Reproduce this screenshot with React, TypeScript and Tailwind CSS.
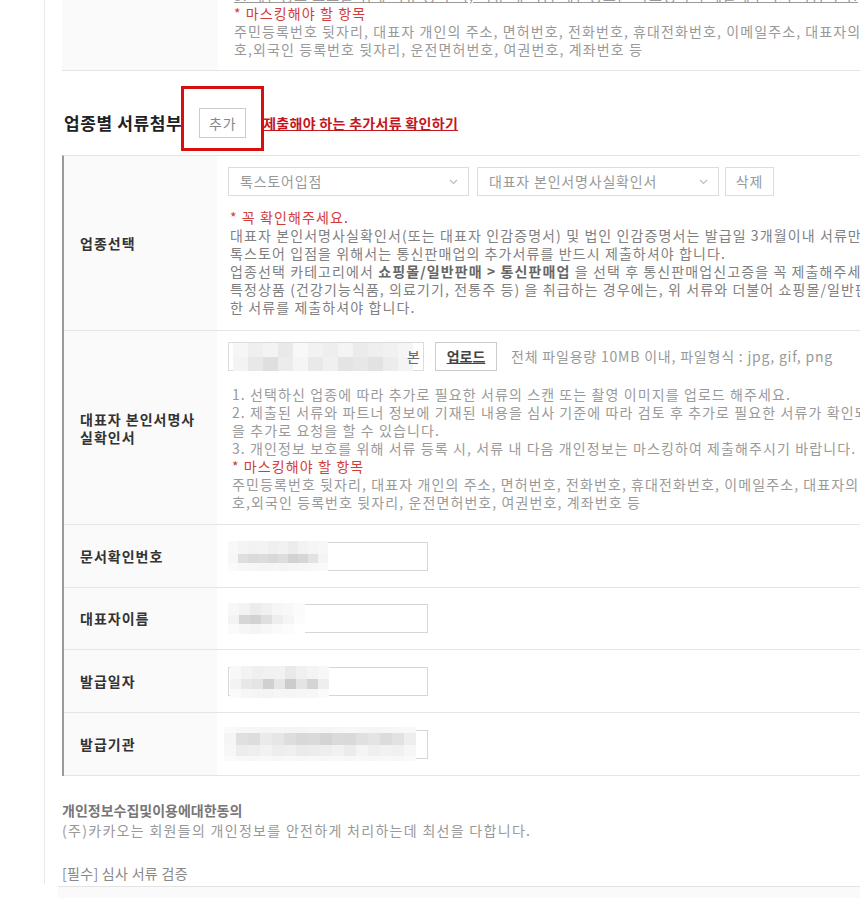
import React from "react";

type BlurRow = { h: number; c: string[] };

// pixelated redaction that sits over the filled-in inputs
function Blur({ rows, cell, className }: { rows: BlurRow[]; cell: number; className: string }) {
  return (
    <div className={className}>
      {rows.map((r, i) => (
        <div key={i} className="flex">
          {r.c.map((c, j) => (
            <div key={j} style={{ width: cell, height: r.h, background: c }} />
          ))}
        </div>
      ))}
    </div>
  );
}

function Chevron() {
  return (
    <svg width="9" height="6" viewBox="0 0 9 6" className="shrink-0">
      <path d="M1 1 L4.5 4.5 L8 1" fill="none" stroke="#bbbbbb" strokeWidth="1.1" />
    </svg>
  );
}

function Select({ value, width }: { value: string; width: string }) {
  return (
    <div className={`${width} h-[29px] border border-[#dcdcdc] bg-white flex items-center justify-between pl-[11px] pr-[10px] text-[#999] tracking-[0.8px]`}>
      <span>{value}</span>
      <Chevron />
    </div>
  );
}

const masking = [
  "주민등록번호 뒷자리, 대표자 개인의 주소, 면허번호, 전화번호, 휴대전화번호, 이메일주소, 대표자의 여권번호, 사업자등록번",
  "호,외국인 등록번호 뒷자리, 운전면허번호, 여권번호, 계좌번호 등",
];

const labelCls = "w-[153px] shrink-0 bg-[#fafafa] flex items-center pl-[16px] text-[14px] font-bold text-[#333] tracking-[1px]";

const fields: { label: string; h: string; blur: { cls: string; cell: number; rows: BlurRow[] } }[] = [
  {
    label: "문서확인번호",
    h: "h-[63px]",
    blur: {
      cls: "absolute left-[-1px] top-[-2px]",
      cell: 10,
      rows: [
        { h: 13, c: ["#f8f8f8", "#f4f4f4", "#f2f2f2", "#f3f3f3", "#efefef", "#f1f1f1", "#ececec", "#f2f2f2", "#f5f5f5", "#f7f7f7"] },
        { h: 9, c: ["#f6f6f6", "#dedede", "#dadada", "#dcdcdc", "#d8d8d8", "#dddddd", "#d2d2d2", "#d6d6d6", "#e2e2e2", "#f4f4f4"] },
        { h: 8, c: ["#fafafa", "#f7f7f7", "#f6f6f6", "#f5f5f5", "#f6f6f6", "#f5f5f5", "#f6f6f6", "#f7f7f7", "#f8f8f8", "#fafafa"] },
      ],
    },
  },
  {
    label: "대표자이름",
    h: "h-[62px]",
    blur: {
      cls: "absolute left-[-1px] top-[-2px]",
      cell: 11,
      rows: [
        { h: 12, c: ["#f7f7f7", "#f3f3f3", "#ececec", "#f0f0f0", "#f6f6f6", "#f8f8f8", "#fbfbfb"] },
        { h: 9, c: ["#f3f3f3", "#d6d6d6", "#d2d2d2", "#dfdfdf", "#eeeeee", "#f5f5f5", "#fcfcfc"] },
        { h: 10, c: ["#fafafa", "#f6f6f6", "#f4f4f4", "#f7f7f7", "#fafafa", "#fcfcfc", "#ffffff"] },
      ],
    },
  },
  {
    label: "발급일자",
    h: "h-[63px]",
    blur: {
      cls: "absolute left-[1px] top-[-2px]",
      cell: 11,
      rows: [
        { h: 13, c: ["#f8f8f8", "#f3f3f3", "#efefef", "#f1f1f1", "#f2f2f2", "#e9e9e9", "#f0f0f0", "#f4f4f4", "#f7f7f7"] },
        { h: 10, c: ["#f3f3f3", "#e8e8e8", "#e4e4e4", "#d0d0d0", "#e6e6e6", "#cccccc", "#e4e4e4", "#d4d4d4", "#eeeeee"] },
        { h: 9, c: ["#fafafa", "#f6f6f6", "#f5f5f5", "#f4f4f4", "#f6f6f6", "#f5f5f5", "#f6f6f6", "#f7f7f7", "#fbfbfb"] },
      ],
    },
  },
  {
    label: "발급기관",
    h: "h-[63px]",
    blur: {
      cls: "absolute left-[-5px] top-[-4px]",
      cell: 12,
      rows: [
        { h: 6, c: ["#fafafa", "#f7f7f7", "#f6f6f6", "#f5f5f5", "#f6f6f6", "#f5f5f5", "#f4f4f4", "#f6f6f6", "#f5f5f5", "#f6f6f6", "#f7f7f7", "#f6f6f6", "#f5f5f5", "#f6f6f6", "#f7f7f7", "#f8f8f8"] },
        { h: 12, c: ["#f5f5f5", "#e0e0e0", "#dddddd", "#eaeaea", "#e6e6e6", "#dddddd", "#d8d8d8", "#dadada", "#d4d4d4", "#dadada", "#d9d9d9", "#e0e0e0", "#e4e4e4", "#dcdcdc", "#e2e2e2", "#eeeeee"] },
        { h: 11, c: ["#f7f7f7", "#ececec", "#eeeeee", "#f2f2f2", "#ededed", "#efefef", "#eaeaea", "#ececec", "#eeeeee", "#f1f1f1", "#ebebeb", "#f4f4f4", "#efefef", "#f2f2f2", "#f0f0f0", "#f6f6f6"] },
        { h: 5, c: ["#fafafa", "#f8f8f8", "#f7f7f7", "#f8f8f8", "#f7f7f7", "#f8f8f8", "#f7f7f7", "#f8f8f8", "#f7f7f7", "#f8f8f8", "#f7f7f7", "#f8f8f8", "#f7f7f7", "#f8f8f8", "#f7f7f7", "#f9f9f9"] },
      ],
    },
  },
];

const uploadBlur: BlurRow[] = [
  { h: 14, c: ["#f6f6f6", "#efefef", "#f3f3f3", "#e9e9e9", "#f8f8f8", "#f2f2f2", "#eeeeee", "#f4f4f4", "#ebebeb", "#efefef", "#f1f1f1", "#f5f5f5"] },
  { h: 14, c: ["#f3f3f3", "#e8e8e8", "#dfdfdf", "#ececec", "#f5f5f5", "#e9e9e9", "#f0f0f0", "#e4e4e4", "#e7e7e7", "#e2e2e2", "#ececec", "#f4f4f4"] },
];

export default function App() {
  return (
    <div className="w-[860px] h-[898px] overflow-hidden bg-white text-[14px] tracking-[1.1px] font-['Noto_Sans_CJK_KR','Noto_Sans',sans-serif]">
      <div className="ml-[44px] w-[1200px] h-full border-l border-[#e8e8e8] pl-[17px]">
        {/* previous row, cut off by the top of the page */}
        <div className="-mt-[14px] flex border-b border-[#e5e5e5]">
          <div className="w-[156px] shrink-0 bg-[#fafafa]" />
          <div className="pl-[16px] pb-[12px] leading-[18px] text-[#999] whitespace-nowrap">
            <div className="underline">3. 개인정보 보호를 위해 서류 등록 시, 서류 내 다음 개인정보는 마스킹하여 제출해주시기 바랍니다.</div>
            <div className="text-[#d23c3c]">* 마스킹해야 할 항목</div>
            <div>{masking[0]}</div>
            <div>{masking[1]}</div>
          </div>
        </div>

        {/* section title */}
        <div className="pt-[37px] pb-[17px]">
          <div className="flex items-center h-[30px]">
            <h2 className="pl-[2px] text-[17px] tracking-[0.6px] font-bold text-[#222]">업종별 서류첨부</h2>
            <div className="relative ml-[17px]">
              <button className="w-[47px] h-[30px] border border-[#cccccc] bg-white text-[#888] tracking-[0.8px]">추가</button>
              <div className="absolute left-[-18px] top-[-22px] w-[83px] h-[65px] border-[3px] border-[#d90f0f]" />
            </div>
            <a className="ml-[17px] text-[14px] font-semibold text-[#c4161c] underline tracking-[0.3px]">
              제출해야 하는 추가서류 확인하기
            </a>
          </div>
        </div>

        {/* form table */}
        <div className="border-t border-l-2 border-t-[#e5e5e5] border-l-[#9a9a9a]">
          <div className="flex border-b border-[#e5e5e5]">
            <div className={labelCls}>업종선택</div>
            <div className="pl-[11px] pt-[11px] pb-[14px]">
              <div className="flex items-center">
                <Select value="톡스토어입점" width="w-[241px]" />
                <div className="ml-[8px]">
                  <Select value="대표자 본인서명사실확인서" width="w-[242px]" />
                </div>
                <button className="ml-[6px] w-[49px] h-[29px] border border-[#dcdcdc] bg-white text-[#999] tracking-[0.8px]">삭제</button>
              </div>
              <div className="mt-[12px] pl-[2px] leading-[18px] text-[#808080] whitespace-nowrap">
                <div className="text-[#d23c3c]">* 꼭 확인해주세요.</div>
                <div>대표자 본인서명사실확인서(또는 대표자 인감증명서) 및 법인 인감증명서는 발급일 3개월이내 서류만 인정됩니다.</div>
                <div>톡스토어 입점을 위해서는 통신판매업의 추가서류를 반드시 제출하셔야 합니다.</div>
                <div>
                  업종선택 카테고리에서 <b className="text-[#666]">쇼핑몰/일반판매 &gt; 통신판매업</b> 을 선택 후 통신판매업신고증을 꼭 제출해주세요.
                </div>
                <div>특정상품 (건강기능식품, 의료기기, 전통주 등) 을 취급하는 경우에는, 위 서류와 더불어 쇼핑몰/일반판매 업종에 해당</div>
                <div>한 서류를 제출하셔야 합니다.</div>
              </div>
            </div>
          </div>

          <div className="flex border-b border-[#e5e5e5]">
            <div className={labelCls}>
              <div className="leading-[18px]">
                <div>대표자 본인서명사</div>
                <div>실확인서</div>
              </div>
            </div>
            <div className="pl-[11px] pt-[11px] pb-[13px]">
              <div className="flex items-center">
                <div className="relative w-[196px] h-[29px] border border-[#dcdcdc] bg-white flex items-center justify-end pr-[2px] text-[#666]">
                  <Blur rows={uploadBlur} cell={15} className="absolute left-[4px] top-0" />
                  <span className="relative">본</span>
                </div>
                <button className="ml-[11px] w-[62px] h-[29px] border border-[#cccccc] bg-white font-bold text-[#444] underline tracking-normal">업로드</button>
                <span className="ml-[14px] text-[#999] tracking-[0.8px]">전체 파일용량 10MB 이내, 파일형식 : jpg, gif, png</span>
              </div>
              <div className="mt-[14px] pl-[4px] leading-[18px] text-[#9a9a9a] whitespace-nowrap">
                <div>1. 선택하신 업종에 따라 추가로 필요한 서류의 스캔 또는 촬영 이미지를 업로드 해주세요.</div>
                <div>2. 제출된 서류와 파트너 정보에 기재된 내용을 심사 기준에 따라 검토 후 추가로 필요한 서류가 확인되는 경우 서류</div>
                <div>을 추가로 요청을 할 수 있습니다.</div>
                <div>3. 개인정보 보호를 위해 서류 등록 시, 서류 내 다음 개인정보는 마스킹하여 제출해주시기 바랍니다.</div>
                <div className="text-[#d23c3c]">* 마스킹해야 할 항목</div>
                <div>{masking[0]}</div>
                <div>{masking[1]}</div>
              </div>
            </div>
          </div>

          {fields.map((f) => (
            <div key={f.label} className={`flex ${f.h} border-b border-[#e5e5e5]`}>
              <div className={labelCls}>{f.label}</div>
              <div className="pl-[11px] flex items-center">
                <div className="relative w-[200px] h-[29px] border border-[#d6d6d6] bg-white">
                  <Blur rows={f.blur.rows} cell={f.blur.cell} className={f.blur.cls} />
                </div>
              </div>
            </div>
          ))}
        </div>

        {/* consent */}
        <div className="mt-[24px] leading-[20px]">
          <div className="font-bold text-[#777] tracking-normal">개인정보수집및이용에대한동의</div>
          <div className="text-[#999] tracking-[1.3px]">(주)카카오는 회원들의 개인정보를 안전하게 처리하는데 최선을 다합니다.</div>
          <div className="mt-[23px] text-[#888] tracking-[0.3px]">[필수] 심사 서류 검증</div>
        </div>
        <div className="mt-[3px] -ml-[4px] h-[20px] border-t border-[#e3e3e3] bg-[#fafafa]" />
      </div>
    </div>
  );
}
